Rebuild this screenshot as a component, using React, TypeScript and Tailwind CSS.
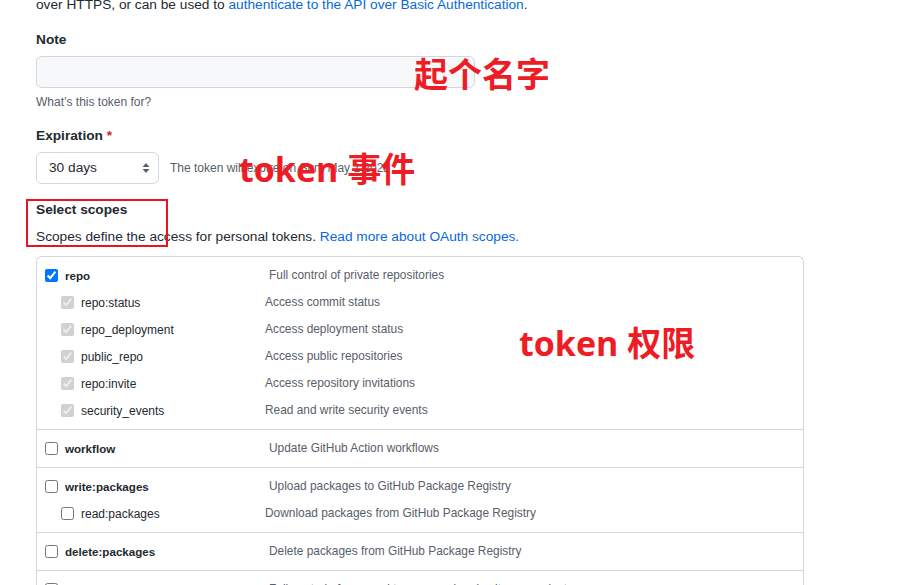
import React from 'react';

type Scope = { name: string; desc: string; checked?: boolean; sub?: { name: string; desc: string; checked?: boolean }[] };

const scopes: Scope[] = [
  {
    name: 'repo',
    desc: 'Full control of private repositories',
    checked: true,
    sub: [
      { name: 'repo:status', desc: 'Access commit status', checked: true },
      { name: 'repo_deployment', desc: 'Access deployment status', checked: true },
      { name: 'public_repo', desc: 'Access public repositories', checked: true },
      { name: 'repo:invite', desc: 'Access repository invitations', checked: true },
      { name: 'security_events', desc: 'Read and write security events', checked: true },
    ],
  },
  { name: 'workflow', desc: 'Update GitHub Action workflows' },
  {
    name: 'write:packages',
    desc: 'Upload packages to GitHub Package Registry',
    sub: [{ name: 'read:packages', desc: 'Download packages from GitHub Package Registry' }],
  },
  { name: 'delete:packages', desc: 'Delete packages from GitHub Package Registry' },
  { name: 'admin:org', desc: 'Full control of orgs and teams, read and write org projects' },
];

function ScopeGroup({ scope }: { scope: Scope }) {
  return (
    <div className="border-b border-[#d0d7de] pt-[5px] pb-[5px]">
      <div className="flex items-center h-[27px] pl-[8px]">
        <input type="checkbox" readOnly checked={!!scope.checked} className="w-[13px] h-[13px] m-0 accent-[#0075ff]" />
        <span className="w-[211px] pl-[7px] text-[11.6px] font-semibold text-[#24292f]">{scope.name}</span>
        <span className="text-[11.9px] text-[#57606a]">{scope.desc}</span>
      </div>
      {scope.sub?.map((s) => (
        <div key={s.name} className="flex items-center h-[27px] pl-[24px]">
          <input type="checkbox" readOnly disabled={!!s.checked} checked={!!s.checked} className="w-[13px] h-[13px] m-0" />
          <span className="w-[191px] pl-[7px] text-[12px] text-[#24292f]">{s.name}</span>
          <span className="text-[11.9px] text-[#57606a]">{s.desc}</span>
        </div>
      ))}
    </div>
  );
}

export default function App() {
  return (
    <div
      className="relative w-[903px] h-[585px] overflow-hidden bg-white text-[#24292f]"
      style={{ fontFamily: '"Liberation Sans", "Noto Sans CJK SC", sans-serif' }}
    >
      <div className="pl-[36px] w-[804px]">
        <p className="-mt-[6px] text-[13.7px] leading-[21px]">
          over HTTPS, or can be used to{' '}
          <span className="text-[#0969da]">authenticate to the API over Basic Authentication</span>.
        </p>

        <div className="mt-[14px] text-[13.7px] leading-[21px] font-semibold">Note</div>
        <div className="mt-[6px] w-[439px] h-[32px] rounded-[6px] border border-[#d0d7de] bg-[#f6f8fa]" />
        <div className="mt-[5px] text-[12px] leading-[18px] text-[#57606a]">What’s this token for?</div>

        <div className="mt-[14px] text-[13.7px] leading-[21px] font-semibold">
          Expiration <span className="text-[#cf222e]">*</span>
        </div>
        <div className="mt-[6px] flex items-center gap-[11px]">
          <div className="w-[123px] h-[32px] rounded-[6px] border border-[#d0d7de] bg-white flex items-center justify-between pl-[12px] pr-[8px]">
            <span className="text-[13.7px]">30 days</span>
            <svg width="8" height="12" viewBox="0 0 8 12">
              <path d="M4 1 L7.5 5 H0.5 Z" fill="#57606a" />
              <path d="M4 11 L7.5 7 H0.5 Z" fill="#57606a" />
            </svg>
          </div>
          <span className="text-[12px] text-[#57606a]">The token will expire on Sun, May 1 2022</span>
        </div>

        <div className="mt-[15px] text-[13.7px] leading-[21px] font-semibold">Select scopes</div>
        <div className="mt-[6px] text-[13.7px] leading-[21px]">
          Scopes define the access for personal tokens.{' '}
          <span className="text-[#0969da]">Read more about OAuth scopes.</span>
        </div>

        <div className="mt-[9px] w-[768px] rounded-t-[6px] border border-b-0 border-[#d0d7de]">
          {scopes.map((s) => (
            <ScopeGroup key={s.name} scope={s} />
          ))}
        </div>
      </div>

      {/* annotations */}
      <div className="absolute left-[26px] top-[199px] w-[142px] h-[48px] border-2 border-[#e8141e]" />
      <div
        className="absolute left-[414px] top-[52px] text-[34px] leading-[44px] font-bold text-[#ee1c25]"
        style={{ fontFamily: '"Open Sans", "Noto Sans CJK SC", sans-serif' }}
      >
        起个名字
      </div>
      <div
        className="absolute left-[239px] top-[147px] text-[34px] leading-[44px] font-bold text-[#ee1c25]"
        style={{ fontFamily: '"Open Sans", "Noto Sans CJK SC", sans-serif' }}
      >
        token 事件
      </div>
      <div
        className="absolute left-[519px] top-[321px] text-[34px] leading-[44px] font-bold text-[#ee1c25]"
        style={{ fontFamily: '"Open Sans", "Noto Sans CJK SC", sans-serif' }}
      >
        token 权限
      </div>
    </div>
  );
}
